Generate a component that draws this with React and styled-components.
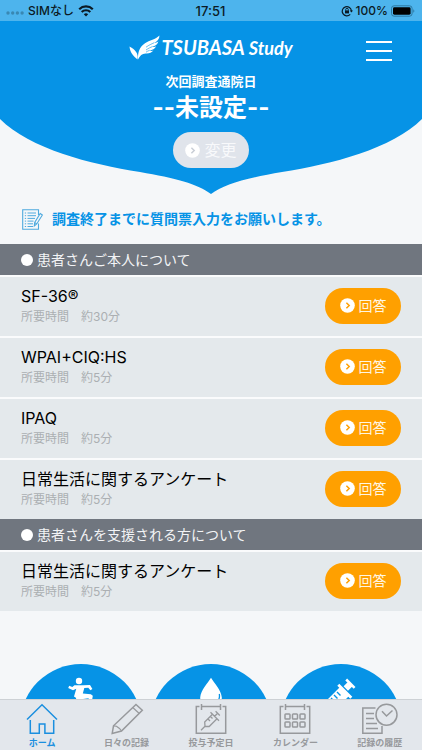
import React from "react";
import styled, { createGlobalStyle } from "styled-components";

const BLUE = "#0693e6";
const ORANGE = "#ffa000";

const GlobalStyle = createGlobalStyle`
  *, *::before, *::after { box-sizing: border-box; }
  body {
    margin: 0;
    background: #f5f7f9;
    color: #000;
    font-family: Inter, "Noto Sans CJK JP", sans-serif;
  }
  h1, h2, h3, p, ul { margin: 0; padding: 0; }
  ul { list-style: none; }
  button { font: inherit; border: 0; cursor: pointer; }
`;

const Screen = styled.div`
  height: 100vh;
  display: flex;
  flex-direction: column;
`;

const Scroller = styled.div`
  flex: 1;
  min-height: 0;
  overflow-y: auto;
  scrollbar-width: none;
`;

const StatusBar = styled.div`
  display: grid;
  grid-template-columns: 1fr auto 1fr;
  align-items: center;
  height: 21px;
  flex: none;
  padding: 0 7px 0 6px;
  background: #4db4ed;
  color: #0b1a24;
  font-size: 12px;
  line-height: 20px;
  font-weight: 500;
`;

const StatusGroup = styled.div`
  display: flex;
  align-items: center;
  justify-content: ${(p) => (p.$end ? "flex-end" : "flex-start")};
  gap: ${(p) => (p.$end ? 3 : 4)}px;
`;

const Clock = styled.span`
  font-size: 13px;
`;

const Hero = styled.header`
  position: relative;
  height: 173px;
  color: #fff;
`;

const HeroShape = styled.svg`
  position: absolute;
  inset: 0;
  width: 100%;
  height: 100%;
  display: block;
`;

const HeroContent = styled.div`
  position: relative;
  display: flex;
  flex-direction: column;
`;

const TopBar = styled.div`
  display: grid;
  grid-template-columns: 1fr auto 1fr;
  align-items: center;
  height: 50px;
  padding: 10px 30px 0;
`;

const Logo = styled.h1`
  grid-column: 2;
  align-self: start;
  display: flex;
  align-items: center;
  gap: 1px;
  font-family: Lato, sans-serif;
  font-style: italic;
  font-weight: 700;
  font-size: 20px;
  line-height: 32px;
`;

const LogoWord = styled.span`
  display: flex;
  align-items: baseline;
  gap: 4px;
`;

const LogoSmall = styled.span`
  font-size: 18px;
`;

const MenuButton = styled.button`
  justify-self: end;
  display: flex;
  padding: 0;
  background: none;
  color: #fff;
`;

const Visit = styled.div`
  display: flex;
  flex-direction: column;
  align-items: center;
`;

const VisitLabel = styled.p`
  font-size: 13px;
  line-height: 20px;
  font-weight: 700;
`;

const VisitDate = styled.p`
  margin-bottom: 7px;
  font-size: 24px;
  line-height: 34px;
  font-weight: 700;
`;

const Pill = styled.button`
  display: flex;
  align-items: center;
  justify-content: center;
  gap: 4px;
  flex: none;
  width: 76px;
  height: 36px;
  padding: 0;
  border-radius: 18px;
  background: ${(p) => (p.$muted ? "#e0e4eb" : ORANGE)};
  color: ${(p) => (p.$muted ? "#f8f9fb" : "#fff6e2")};
  font-size: ${(p) => (p.$muted ? 16 : 14)}px;
  line-height: 20px;
`;

const Notice = styled.p`
  display: flex;
  align-items: center;
  gap: 9px;
  padding: 13px 21px 13px 22px;
  color: ${BLUE};
  font-size: 14px;
  line-height: 24px;
  font-weight: 700;
`;

const SectionTitle = styled.h2`
  display: flex;
  align-items: center;
  gap: 4px;
  height: 31px;
  padding: 0 21px;
  background: #70767f;
  color: #f3f4f6;
  font-size: 14px;
  line-height: 20px;
  font-weight: 400;

  &::before {
    content: "";
    width: 12px;
    height: 12px;
    border-radius: 50%;
    background: #fff;
  }
`;

const Row = styled.li`
  display: flex;
  align-items: center;
  justify-content: space-between;
  height: 61px;
  padding: 0 21px 2px;
  border-top: 2px solid #fafbfc;
  background: #e4e9ec;
`;

const RowTitle = styled.h3`
  font-size: 16px;
  line-height: 22px;
  font-weight: 400;
`;

const RowTime = styled.p`
  font-size: 12px;
  line-height: 20px;
  color: #abafb2;
`;

const Shortcuts = styled.div`
  display: grid;
  grid-template-columns: repeat(3, 1fr);
  gap: 8px;
  padding: 53px 20px 20px;
`;

const Shortcut = styled.button`
  display: flex;
  justify-content: center;
  align-items: flex-start;
  aspect-ratio: 1;
  padding: 13px 0 0;
  border-radius: 50%;
  background: ${BLUE};
  color: #fff;
`;

const TabBar = styled.nav`
  display: grid;
  grid-template-columns: repeat(5, 1fr);
  flex: none;
  height: 51px;
  border-top: 1px solid #cdd1d5;
  background: #e3e7ec;
`;

const Tab = styled.a`
  display: flex;
  flex-direction: column;
  align-items: center;
  padding-top: 2px;
  color: ${(p) => (p.$active ? "#1b8fdf" : "#97999c")};
  font-size: 9px;
  line-height: 14px;
  font-weight: 700;
  text-decoration: none;
  white-space: nowrap;
`;

const Chevron = ({ color }) => (
  <svg width="15" height="15" viewBox="0 0 15 15" aria-hidden="true">
    <circle cx="7.5" cy="7.5" r="7.3" fill="#fff" />
    <path d="M6.4 4.7 9.2 7.5 6.4 10.3" fill="none" stroke={color} strokeWidth="1.5" />
  </svg>
);

const Wing = () => (
  <svg width="31" height="25" viewBox="0 0 31 25" fill="#fff" aria-hidden="true">
    <path d="M0.5 11.5C1 17 3.5 20.5 8.5 24.5C9.5 18.5 6.5 14.8 0.5 11.5Z" />
    <path d="M9 24.5C8.8 17 10.5 11.8 16 8.2C20.5 5.2 26.5 4.5 30.5 0.5C30.3 4.2 28.5 6.6 24.8 8.1C26.8 8 28.3 7.5 29.4 6.6C28.5 9.6 26.4 11.2 23 11.8C24.8 12.1 26.2 11.9 27.2 11.3C25.8 14.2 23.6 15.3 20.4 15.4C22 16 23.2 16 24.4 15.6C22.5 18 20 18.6 16.6 18.4C13 18.5 11 20.5 9 24.5Z" />
    <path d="M17 12.2C20 10 22.5 9 25 7.8M17 15C19.5 13.2 21.5 12.4 23.5 11.6M17 17.2C18 16.4 19.2 15.8 20.7 15.3" fill="none" stroke={BLUE} strokeWidth="0.6" />
  </svg>
);

const SignalDots = () => (
  <svg width="18" height="12" viewBox="0 0 18 12" fill="#3988b3" aria-hidden="true">
    <circle cx="2" cy="8" r="1.7" /><circle cx="6.7" cy="8" r="1.7" />
    <circle cx="11.4" cy="8" r="1.7" /><circle cx="16.1" cy="8" r="1.7" />
  </svg>
);

const Wifi = () => (
  <svg width="16" height="12" viewBox="0 0 16 12" fill="none" stroke="#0b1a24" strokeWidth="2.2" aria-label="Wi-Fi">
    <path d="M1.2 4.2a9.8 9.8 0 0 1 13.6 0M3.7 7a6.2 6.2 0 0 1 8.6 0" />
    <path d="M8 11.5 5.8 9.2a3.2 3.2 0 0 1 4.4 0Z" fill="#0b1a24" stroke="none" />
  </svg>
);

const RotationLock = () => (
  <svg width="12" height="12" viewBox="0 0 12 12" fill="none" stroke="#0b1a24" aria-hidden="true">
    <path d="M9.2 9.3A4.6 4.6 0 1 1 10.4 6" strokeWidth="1.2" />
    <path d="M8.8 5.4H12L10.4 7.6Z" fill="#0b1a24" stroke="none" />
    <rect x="4" y="5.4" width="4" height="3" fill="#0b1a24" stroke="none" />
    <path d="M4.7 5.5V4.6a1.3 1.3 0 0 1 2.6 0v0.9" strokeWidth="0.9" />
  </svg>
);

const Battery = () => (
  <svg width="24" height="12" viewBox="0 0 24 12" aria-hidden="true">
    <rect x="0.5" y="0.8" width="20.6" height="10.4" rx="2.6" fill="none" stroke="#2c78a2" />
    <rect x="2" y="2.3" width="17.6" height="7.4" rx="1.4" fill="#000" />
    <path d="M22.3 4.2c1.4 0.6 1.4 3 0 3.6Z" fill="#2c78a2" />
  </svg>
);

const MemoIcon = () => (
  <svg width="21" height="21" viewBox="0 0 21 21" fill="none" stroke="#4faade" aria-hidden="true">
    <path d="M16.5 6V0.7H0.7V20.3H16.5V14.5" strokeWidth="1.1" />
    <path d="M5.5 4H14M5.5 6.7H14M5.5 9.4H13M5.5 12.1H11.5M5.5 14.8H11M5.5 17.5H11M2.8 4H4.1M2.8 6.7H4.1M2.8 9.4H4.1M2.8 12.1H4.1M2.8 14.8H4.1M2.8 17.5H4.1" />
    <path d="M18.2 4.5 20.4 6 14.7 15 12.3 17 12.7 13.4ZM12.7 13.4 14.7 15" fill="#f5f7f9" strokeWidth="1.1" />
  </svg>
);

const TabIcon = ({ children }) => (
  <svg width="36" height="34" viewBox="0 0 36 34" fill="none" stroke="currentColor" strokeWidth="1.5" aria-hidden="true">
    {children}
  </svg>
);

const HomeIcon = () => (
  <TabIcon>
    <path d="M3 17.5 18 2.7 33 17.5" />
    <path d="M6.3 18V31.3H15.3V22H20.9V31.3H29.7V18" />
  </TabIcon>
);

const PencilIcon = () => (
  <TabIcon>
    <path d="M27 2.5 33.3 8.2 12.5 29 3.2 31.5 4.5 23.8Z" />
    <path d="M4.5 23.8 7.5 24.2 10.5 26.5 12.5 29M24 5.7 30 11.2" strokeWidth="1.2" />
  </TabIcon>
);

const CalendarFrame = () => (
  <path d="M6.5 4.5H3.3V31.3H32.7V4.5H29.5M8.5 2V8M27.5 2V8M8.5 4.5H27.5" />
);

const DoseIcon = () => (
  <TabIcon>
    <CalendarFrame />
    <path d="M8 28.2 12 24.2M12 24.3 11.7 20 19.5 12.2 24 16.7 16.2 24.5ZM17.5 10.3 26 18.7M21.7 14.2 24.6 11.2M22.6 9.3 26.8 13.5M15 17 17 19M17.5 14.5 19.5 16.5" strokeWidth="1.3" />
  </TabIcon>
);

const CalendarIcon = () => (
  <TabIcon>
    <CalendarFrame />
    {[12, 20].map((y) =>
      [8, 15.5, 23].map((x) => <rect key={`${x}-${y}`} x={x} y={y} width="5" height="5" rx="0.8" />)
    )}
  </TabIcon>
);

const HistoryIcon = () => (
  <TabIcon>
    <path d="M13.5 6H0.8V31.3H20V24M4 11.5H12M4 16.5H12M4 21.5H15M4 26.5H16" />
    <circle cx="24.5" cy="12.7" r="10.5" />
    <path d="M20 9.2 24.5 14 30.5 8.5" />
  </TabIcon>
);

const RunnerIcon = () => (
  <svg width="28" height="36" viewBox="0 0 28 36" aria-hidden="true">
    <circle cx="12" cy="4" r="3.2" fill="#fff" />
    <path d="M7.5 8.3H16.5L23 8.1 25.4 12 23.4 13.2 21.3 10.8 17.3 11 15.8 16.5 23.8 17.2 25.8 18.8 24.8 25H21.8L21.6 21.2 14 22.3 10 29 2 29V26H8L9.2 21 7 19.5 9.3 11.8 6 13.3 1.2 11 2.2 8.8 5.3 10Z" fill="#fff" />
  </svg>
);

const DropIcon = () => (
  <svg width="28" height="40" viewBox="0 0 28 40" aria-hidden="true">
    <path d="M14 0.8C17 6 24.2 13 24.8 20.5A10.8 10.8 0 0 1 3.2 20.5C3.8 13 11 6 14 0.8Z" fill="#fff" />
    <path d="M22.3 17C22.9 20 22 23 20 25.5" fill="none" stroke={BLUE} strokeWidth="1.3" />
  </svg>
);

const SyringeIcon = () => (
  <svg width="40" height="40" viewBox="0 0 40 40" aria-hidden="true">
    <path d="M9 33 7.5 23.5 20.5 10.5 29.5 19.5 16.5 32.5ZM20.3 6.7 33.3 19.7 31.3 21.7 18.3 8.7ZM24.6 9.3 28.6 5.3 33 9.7 29 13.7ZM28.1 1.6 36.5 10 34.7 11.8 26.3 3.4Z" fill="#fff" transform="translate(-2 0)" />
    <path d="M10 21 13.5 24.5M13 18 16.5 21.5M16 15 19.5 18.5" stroke={BLUE} strokeWidth="1.4" />
  </svg>
);

const sections = [
  {
    title: "患者さんご本人について",
    items: [
      ["SF-36®", "約30分"],
      ["WPAI+CIQ:HS", "約5分"],
      ["IPAQ", "約5分"],
      ["日常生活に関するアンケート", "約5分"],
    ],
  },
  {
    title: "患者さんを支援される方について",
    items: [["日常生活に関するアンケート", "約5分"]],
  },
];

const tabs = [
  ["ホーム", HomeIcon],
  ["日々の記録", PencilIcon],
  ["投与予定日", DoseIcon],
  ["カレンダー", CalendarIcon],
  ["記録の履歴", HistoryIcon],
];

export default function App() {
  return (
    <Screen lang="ja">
      <GlobalStyle />
      <StatusBar>
        <StatusGroup>
          <SignalDots />
          <span>SIMなし</span>
          <Wifi />
        </StatusGroup>
        <Clock>17:51</Clock>
        <StatusGroup $end>
          <RotationLock />
          <span>100%</span>
          <Battery />
        </StatusGroup>
      </StatusBar>

      <Scroller>
        <Hero>
          <HeroShape viewBox="0 0 422 173" preserveAspectRatio="none" aria-hidden="true">
            <path
              d="M0 0H422V98C392 128 332 143 282 151C247 157 224 163 211 173C198 163 175 157 140 151C90 143 30 128 0 98Z"
              fill={BLUE}
            />
          </HeroShape>
          <HeroContent>
            <TopBar>
              <Logo>
                <Wing />
                <LogoWord>
                  TSUBASA <LogoSmall>Study</LogoSmall>
                </LogoWord>
              </Logo>
              <MenuButton type="button" aria-label="メニュー">
                <svg width="26" height="20" viewBox="0 0 26 20" stroke="currentColor" strokeWidth="2">
                  <path d="M0 1H26M0 10H26M0 19H26" />
                </svg>
              </MenuButton>
            </TopBar>
            <Visit>
              <VisitLabel>次回調査通院日</VisitLabel>
              <VisitDate>--未設定--</VisitDate>
              <Pill type="button" $muted>
                <Chevron color="#c9ced6" />
                変更
              </Pill>
            </Visit>
          </HeroContent>
        </Hero>

        <main>
          <Notice>
            <MemoIcon />
            調査終了までに質問票入力をお願いします。
          </Notice>
          {sections.map((section) => (
            <section key={section.title}>
              <SectionTitle>{section.title}</SectionTitle>
              <ul>
                {section.items.map(([title, time]) => (
                  <Row key={title}>
                    <div>
                      <RowTitle>{title}</RowTitle>
                      <RowTime>所要時間　{time}</RowTime>
                    </div>
                    <Pill type="button">
                      <Chevron color={ORANGE} />
                      回答
                    </Pill>
                  </Row>
                ))}
              </ul>
            </section>
          ))}
          <Shortcuts>
            <Shortcut type="button" aria-label="運動"><RunnerIcon /></Shortcut>
            <Shortcut type="button" aria-label="出血"><DropIcon /></Shortcut>
            <Shortcut type="button" aria-label="注射"><SyringeIcon /></Shortcut>
          </Shortcuts>
        </main>
      </Scroller>

      <TabBar>
        {tabs.map(([label, Icon], i) => (
          <Tab key={label} href="#" $active={i === 0} aria-current={i === 0 ? "page" : undefined}>
            <Icon />
            {label}
          </Tab>
        ))}
      </TabBar>
    </Screen>
  );
}
